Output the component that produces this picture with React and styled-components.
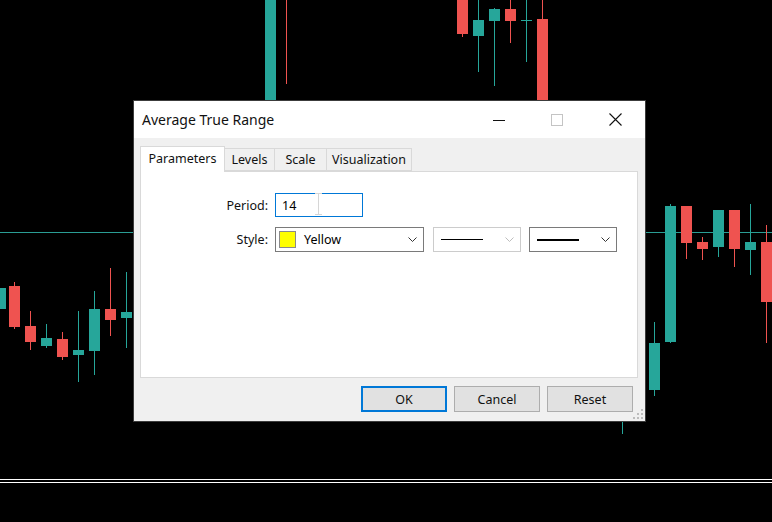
import React from "react";
import styled, { createGlobalStyle } from "styled-components";

const GlobalStyle = createGlobalStyle`
  html, body { margin: 0; padding: 0; background: #000; }
  body { font-family: "Noto Sans", "Open Sans", sans-serif; }
`;

const UP = "#26a69a";
const DOWN = "#ef5350";

// [x, bodyTop, bodyBottom, wickTop, wickBottom, up]
const candles = [
  [0, 288, 309, 288, 309, true],
  [14, 286, 327, 282, 329, false],
  [30, 326, 342, 311, 350, false],
  [46, 338, 346, 324, 348, true],
  [62, 339, 357, 332, 360, false],
  [78, 350, 355, 311, 382, true],
  [94, 309, 351, 291, 375, true],
  [110, 309, 320, 268, 336, false],
  [126, 312, 318, 272, 348, true],
  [270, -5, 100, -5, 100, true],
  [286, -5, -5, -5, 84, false],
  [462, -5, 34, -5, 37, false],
  [478, 20, 36, -5, 72, true],
  [494, 9, 21, 8, 86, true],
  [510, 9, 21, -5, 43, false],
  [526, 20, 21, -5, 62, true],
  [542, 19, 110, -5, 110, false],
  [622, 420, 420, 400, 434, true],
  [654, 343, 390, 322, 396, true],
  [670, 206, 342, 204, 343, true],
  [686, 206, 243, 206, 259, false],
  [702, 242, 249, 237, 260, false],
  [718, 210, 247, 210, 257, true],
  [734, 210, 249, 210, 267, false],
  [750, 242, 250, 204, 275, true],
  [766, 242, 302, 225, 343, false],
];

const Desktop = styled.div`
  position: relative;
  width: 772px;
  height: 522px;
  overflow: hidden;
  background: #000;
`;

const Chart = styled.svg`
  display: block;
`;

const Window = styled.div`
  position: absolute;
  left: 133px;
  top: 100px;
  width: 511px;
  height: 320px;
  border: 1px solid #3c3c3c;
  background: #f0f0f0;
  display: flex;
  flex-direction: column;
  font-size: 12px;
  color: #000;
`;

const TitleBar = styled.div`
  height: 37px;
  background: #fff;
  display: flex;
  align-items: center;
  padding-left: 8px;
  padding-right: 1px;
`;

const Title = styled.div`
  flex: 1;
  font-size: 14px;
  color: #111;
  padding-bottom: 1px;
`;

const Caption = styled.div`
  width: 58px;
  height: 37px;
  display: flex;
  align-items: center;
  justify-content: center;
`;

const Body = styled.div`
  flex: 1;
  display: flex;
  flex-direction: column;
  padding: 8px 7px 9px 6px;
`;

const TabStrip = styled.div`
  display: flex;
  align-items: flex-end;
  height: 25px;
  position: relative;
  z-index: 1;
`;

const Tab = styled.div`
  width: ${(p) => p.$w}px;
  height: ${(p) => (p.$active ? "26px" : "23px")};
  margin-bottom: ${(p) => (p.$active ? "-1px" : "0")};
  background: ${(p) => (p.$active ? "#fff" : "#f0f0f0")};
  border: 1px solid #d9d9d9;
  border-bottom: ${(p) => (p.$active ? "none" : "1px solid #d9d9d9")};
  border-left-width: ${(p) => (p.$active ? "1px" : "0")};
  box-sizing: border-box;
  display: flex;
  align-items: center;
  justify-content: center;
  padding-bottom: ${(p) => (p.$active ? "3px" : "0")};
  font-size: 12.5px;
  color: #111;
`;

const Panel = styled.div`
  height: 207px;
  background: #fff;
  border: 1px solid #d9d9d9;
  padding-top: 21px;
  display: flex;
  flex-direction: column;
  gap: 10px;
  box-sizing: border-box;
`;

const Row = styled.div`
  display: flex;
  align-items: center;
`;

const Label = styled.div`
  width: 127px;
  text-align: right;
  padding-right: 7px;
  font-size: 12.5px;
  color: #111;
`;

const Input = styled.div`
  position: relative;
  width: 88px;
  height: 24px;
  box-sizing: border-box;
  border: 1px solid #0078d7;
  display: flex;
  align-items: center;
  padding-left: 6px;
  font-size: 12.5px;
`;

const Cursor = styled.svg`
  position: absolute;
  left: 39px;
  top: -1px;
`;

const Select = styled.div`
  width: ${(p) => p.$w}px;
  height: 25px;
  margin-right: ${(p) => p.$gap || 0}px;
  box-sizing: border-box;
  border: 1px solid ${(p) => (p.$disabled ? "#cccccc" : "#7a7a7a")};
  background: #fff;
  display: flex;
  align-items: center;
  padding: 0 6px 0 3px;
  gap: 8px;
  font-size: 12.5px;
`;

const Swatch = styled.div`
  width: 17px;
  height: 17px;
  box-sizing: border-box;
  background: #ffff00;
  border: 1px solid #8a8a8a;
`;

const SelectText = styled.div`
  flex: 1;
`;

const LineSample = styled.div`
  flex: 1;
  height: ${(p) => p.$thick}px;
  background: #000;
  margin: 0 14px 0 4px;
`;

const Buttons = styled.div`
  display: flex;
  justify-content: flex-end;
  gap: 7px;
  padding: 8px 5px 0 0;
`;

const Button = styled.div`
  width: 86px;
  height: 26px;
  box-sizing: border-box;
  border: ${(p) => (p.$default ? "2px solid #0078d7" : "1px solid #adadad")};
  background: #e1e1e1;
  display: flex;
  align-items: center;
  justify-content: center;
  font-size: 12.5px;
  color: #111;
`;

const Grip = styled.svg`
  position: absolute;
  right: 1px;
  bottom: 1px;
`;

function Chevron({ color }) {
  return (
    <svg width="9" height="6" viewBox="0 0 9 6">
      <path d="M0.5 0.5 L4.5 4.5 L8.5 0.5" fill="none" stroke={color} strokeWidth="1" />
    </svg>
  );
}

function Candles() {
  return (
    <Chart width="772" height="522" viewBox="0 0 772 522">
      <line x1="0" y1="232.5" x2="772" y2="232.5" stroke="#2a9d94" strokeWidth="1" />
      {candles.map(([x, bt, bb, wt, wb, up], i) => {
        const c = up ? UP : DOWN;
        return (
          <g key={i}>
            <line x1={x + 0.5} y1={wt} x2={x + 0.5} y2={wb} stroke={c} strokeWidth="1" />
            {bb > bt && <rect x={x - 5} y={bt} width="11" height={bb - bt} fill={c} />}
            {bb <= bt && bt > 0 && <rect x={x - 5} y={bt} width="11" height="1" fill={c} />}
          </g>
        );
      })}
      <rect x="0" y="479" width="772" height="1" fill="#fff" />
      <rect x="0" y="482" width="772" height="1" fill="#fff" />
    </Chart>
  );
}

export default function App() {
  return (
    <Desktop>
      <GlobalStyle />
      <Candles />
      <Window>
        <TitleBar>
          <Title>Average True Range</Title>
          <Caption>
            <svg width="12" height="12" viewBox="0 0 12 12">
              <rect x="0" y="6" width="12" height="1" fill="#111" />
            </svg>
          </Caption>
          <Caption>
            <svg width="12" height="12" viewBox="0 0 12 12">
              <rect x="0.5" y="0.5" width="11" height="11" fill="none" stroke="#c4c4c4" />
            </svg>
          </Caption>
          <Caption>
            <svg width="13" height="13" viewBox="0 0 13 13">
              <path d="M0.5 0.5 L12.5 12.5 M12.5 0.5 L0.5 12.5" stroke="#111" strokeWidth="1.1" />
            </svg>
          </Caption>
        </TitleBar>
        <Body>
          <TabStrip>
            <Tab $active $w={85}>Parameters</Tab>
            <Tab $w={50}>Levels</Tab>
            <Tab $w={52}>Scale</Tab>
            <Tab $w={85}>Visualization</Tab>
          </TabStrip>
          <Panel>
            <Row>
              <Label>Period:</Label>
              <Input>
                14
                <Cursor width="7" height="22" viewBox="0 0 7 22">
                  <path d="M0 0.5 H7 M3.5 0.5 V21.5 M0 21.5 H7" stroke="#d6d6d6" strokeWidth="1" />
                </Cursor>
              </Input>
            </Row>
            <Row>
              <Label>Style:</Label>
              <Select $w={149} $gap={9}>
                <Swatch />
                <SelectText>Yellow</SelectText>
                <Chevron color="#333" />
              </Select>
              <Select $w={88} $gap={8} $disabled>
                <LineSample $thick={1} />
                <Chevron color="#bdbdbd" />
              </Select>
              <Select $w={88}>
                <LineSample $thick={2} />
                <Chevron color="#333" />
              </Select>
            </Row>
          </Panel>
          <Buttons>
            <Button $default>OK</Button>
            <Button>Cancel</Button>
            <Button>Reset</Button>
          </Buttons>
        </Body>
        <Grip width="11" height="11" viewBox="0 0 11 11">
          <rect x="8" y="0" width="2" height="2" fill="#bdbdbd" />
          <rect x="4" y="4" width="2" height="2" fill="#bdbdbd" />
          <rect x="8" y="4" width="2" height="2" fill="#bdbdbd" />
          <rect x="0" y="8" width="2" height="2" fill="#bdbdbd" />
          <rect x="4" y="8" width="2" height="2" fill="#bdbdbd" />
          <rect x="8" y="8" width="2" height="2" fill="#bdbdbd" />
        </Grip>
      </Window>
    </Desktop>
  );
}
